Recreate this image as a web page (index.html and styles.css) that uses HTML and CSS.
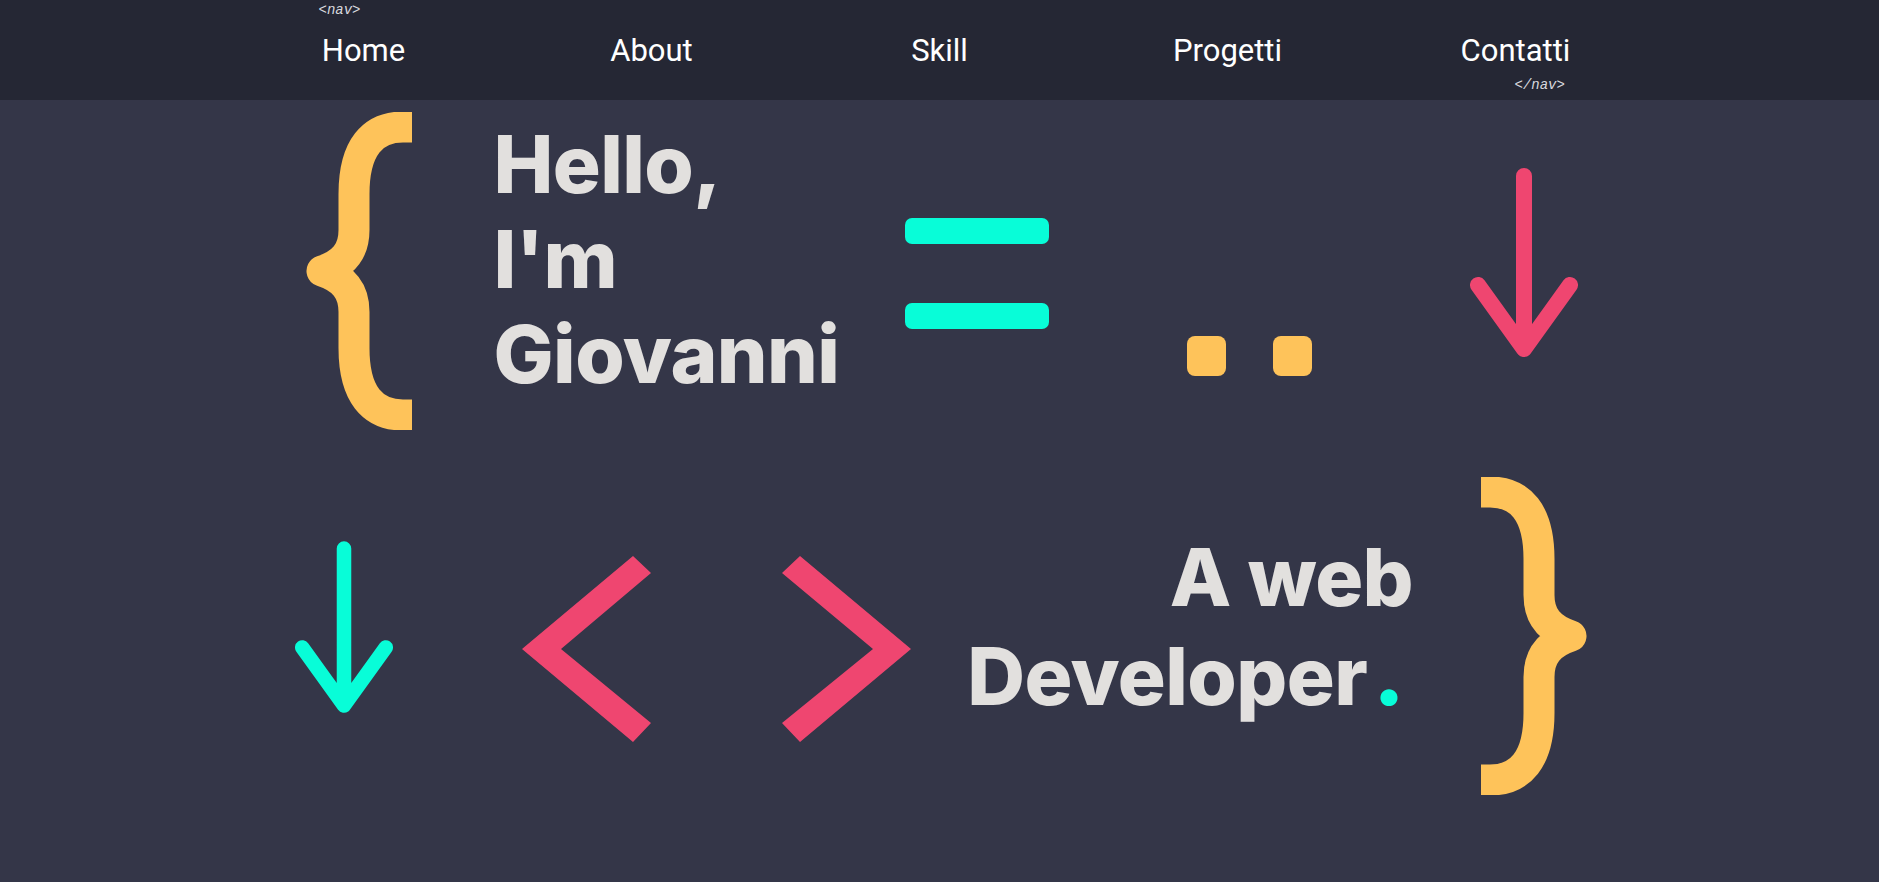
FILE: index.html
```html
<!DOCTYPE html>
<html lang="it">
<head>
<meta charset="utf-8">
<title>Giovanni - Web Developer</title>
<link rel="stylesheet" href="styles.css">
</head>
<body>
<header class="topbar">
  <nav class="nav">
    <a class="nav-link" href="#home">Home</a>
    <a class="nav-link" href="#about">About</a>
    <a class="nav-link" href="#skill">Skill</a>
    <a class="nav-link" href="#progetti">Progetti</a>
    <a class="nav-link" href="#contatti">Contatti</a>
  </nav>
</header>
<main class="hero">
  <div class="hero-row hero-row-top">
    <svg class="brace brace-left" viewBox="0 0 107 318" aria-hidden="true">
      <path d="M103,15 L98,15 C68,15 49,35 49,82 L49,118 C49,140 38,152 17,159 C38,166 49,178 49,200 L49,236 C49,283 68,303 98,303 L103,303"/>
    </svg>
    <h1 class="greeting">Hello,<br>I'm<br>Giovanni</h1>
    <div class="equals"><span class="bar"></span><span class="bar"></span></div>
    <div class="colon"><span class="square"></span><span class="square"></span></div>
    <svg class="arrow arrow-red" viewBox="0 0 108 189" aria-hidden="true">
      <path d="M54,8 V181 M8,117 L54,181 L100,117"/>
    </svg>
  </div>
  <div class="hero-row hero-row-bottom">
    <svg class="arrow arrow-cyan" viewBox="0 0 108 189" aria-hidden="true">
      <path d="M54,8 V181 M8,117 L54,181 L100,117"/>
    </svg>
    <svg class="chevron chevron-left" viewBox="0 0 129 186" aria-hidden="true">
      <polygon points="111,0 129,17 39,93 129,167 111,186 0,93"/>
    </svg>
    <svg class="chevron chevron-right" viewBox="0 0 129 186" aria-hidden="true">
      <polygon points="18,0 0,17 91,93 0,167 18,186 129,93"/>
    </svg>
    <p class="tagline">A web<br>Developer<span class="dot">.</span></p>
    <svg class="brace brace-right" viewBox="0 0 107 318" aria-hidden="true">
      <path d="M103,15 L98,15 C68,15 49,35 49,82 L49,118 C49,140 38,152 17,159 C38,166 49,178 49,200 L49,236 C49,283 68,303 98,303 L103,303"/>
    </svg>
  </div>
</main>
</body>
</html>
```
FILE: styles.css
```css
* { box-sizing: border-box; }

html, body {
  margin: 0;
  padding: 0;
  background: #343648;
}

body {
  font-family: "Inter", "Roboto", sans-serif;
  min-height: 882px;
  overflow: hidden;
}

.topbar {
  height: 100px;
  background: #252734;
  display: flex;
  align-items: center;
}

.nav {
  position: relative;
  width: 1440px;
  height: 100px;
  margin: 0 auto;
  display: grid;
  grid-template-columns: repeat(5, 1fr);
  align-items: center;
  justify-items: center;
}

.nav::before,
.nav::after {
  position: absolute;
  font-family: "Liberation Mono", monospace;
  font-style: italic;
  font-size: 14px;
  line-height: 16px;
  color: #d8d8de;
}

.nav::before {
  content: "<nav>";
  left: 99px;
  top: 2px;
}

.nav::after {
  content: "</nav>";
  left: 1295px;
  top: 77px;
}

.nav-link {
  font-family: "Roboto", sans-serif;
  font-size: 31px;
  color: #ffffff;
  text-decoration: none;
  line-height: 1;
}

.hero {
  width: 1300px;
  margin: 0 auto;
}

.hero-row {
  display: flex;
  align-items: flex-start;
}

.hero-row-top { height: 340px; }
.hero-row-bottom { height: 442px; }

.brace {
  width: 107px;
  height: 318px;
  flex: none;
}

.brace path {
  fill: none;
  stroke: #fec35a;
  stroke-width: 31;
  stroke-linejoin: round;
  stroke-linecap: square;
}

.brace-left {
  margin-left: 15px;
  margin-top: 12px;
}

.brace-right {
  margin-left: 68px;
  margin-top: 37px;
  transform: scaleX(-1);
}

.greeting {
  margin: 15.5px 0 0 82px;
  width: 411px;
  flex: none;
  font-size: 80px;
  font-weight: 800;
  letter-spacing: -0.6px;
  line-height: 95px;
  color: #e2e0de;
}

.equals {
  margin-top: 118px;
  width: 144px;
  flex: none;
  display: flex;
  flex-direction: column;
  gap: 59px;
}

.bar {
  display: block;
  height: 26px;
  border-radius: 7px;
  background: #08fdd8;
}

.colon {
  margin: 236px 0 0 138px;
  display: flex;
  gap: 47px;
  flex: none;
}

.square {
  display: block;
  width: 39px;
  height: 40px;
  border-radius: 8px;
  background: #fec35a;
}

.arrow {
  flex: none;
}

.arrow path {
  fill: none;
  stroke-width: 16;
  stroke-linecap: round;
  stroke-linejoin: round;
}

.arrow-red {
  width: 108px;
  height: 189px;
  margin: 68px 0 0 158px;
}

.arrow-red path { stroke: #ef4670; }

.arrow-cyan {
  width: 98px;
  height: 172px;
  margin: 101px 0 0 5.5px;
}

.arrow-cyan path { stroke: #08fdd8; }

.chevron {
  width: 129px;
  height: 186px;
  flex: none;
  margin-top: 116px;
}

.chevron polygon { fill: #ef4670; }

.chevron-left { margin-left: 129px; }
.chevron-right { margin-left: 131px; }

.tagline {
  margin: 88.5px 0 0 0;
  width: 502px;
  flex: none;
  text-align: right;
  font-size: 80px;
  font-weight: 800;
  letter-spacing: -0.6px;
  line-height: 95px;
  color: #e2e0de;
}

.dot {
  color: #08fdd8;
  font-size: 92px;
  margin-left: 5.5px;
  margin-right: 8.5px;
}
```
